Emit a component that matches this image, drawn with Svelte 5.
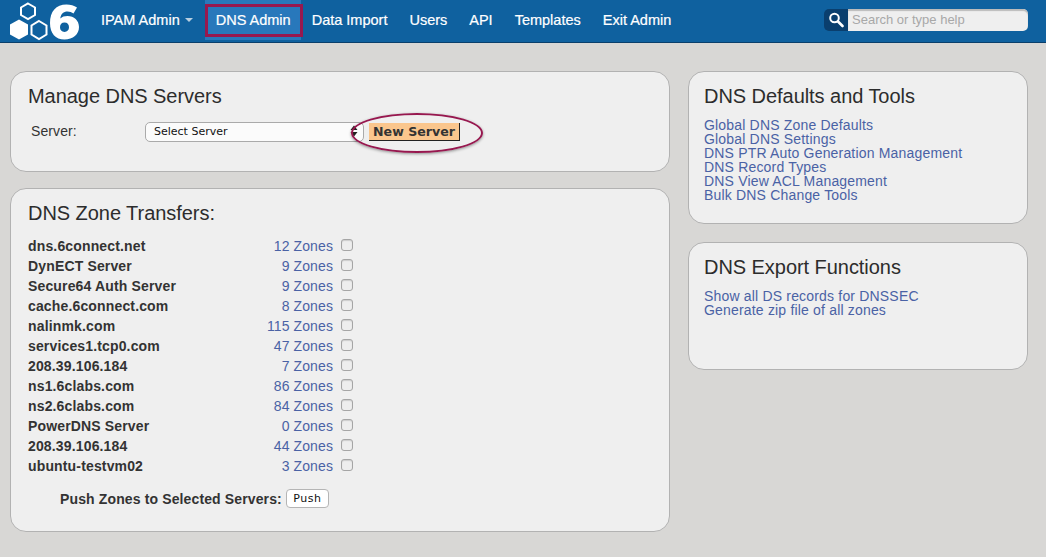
<script>
    const navItems = ['DNS Admin', 'Data Import', 'Users', 'API', 'Templates', 'Exit Admin']

    const servers = [
        ['dns.6connect.net', 12],
        ['DynECT Server', 9],
        ['Secure64 Auth Server', 9],
        ['cache.6connect.com', 8],
        ['nalinmk.com', 115],
        ['services1.tcp0.com', 47],
        ['208.39.106.184', 7],
        ['ns1.6clabs.com', 86],
        ['ns2.6clabs.com', 84],
        ['PowerDNS Server', 0],
        ['208.39.106.184', 44],
        ['ubuntu-testvm02', 3],
    ]

    const toolLinks = [
        'Global DNS Zone Defaults',
        'Global DNS Settings',
        'DNS PTR Auto Generation Management',
        'DNS Record Types',
        'DNS View ACL Management',
        'Bulk DNS Change Tools',
    ]

    const exportLinks = ['Show all DS records for DNSSEC', 'Generate zip file of all zones']
</script>

<header class="navbar">
    <div class="logo">
        <svg width="90" height="42" viewBox="0 0 90 42">
            <path d="M28 3.5 L35 7.5 V15 L28 19 L21 15 V7.5 Z" fill="none" stroke="#fff" stroke-width="2" />
            <path d="M19 19.5 L28 24.5 V34.5 L19 39.5 L10 34.5 V24.5 Z" fill="#fff" />
            <path d="M39 21 L46.500 25.500 V34.500 L39 39 L31.500 34.500 V25.500 Z" fill="none" stroke="#fff" stroke-width="2" />
            <path fill="#fff" fill-rule="evenodd" d="M77 7.500 C74 5.500 70.500 4.500 66.500 4.500 C56 4.500 50 11.500 50 23 C50 33.500 55.500 39.500 64.500 39.500 C73 39.500 79 34.500 79 27 C79 20.500 74 16 67.500 16 C64.500 16 62 16.800 60.300 18.500 C60.800 14 63.500 11.500 67.500 11.500 C69.800 11.500 71.800 12.300 73.500 13.500 Z M64.500 22.500 C67.300 22.500 69 24.500 69 27.300 C69 30 67.300 32 64.500 32 C61.700 32 60 30 60 27.300 C60 24.500 61.700 22.500 64.500 22.500 Z" />
        </svg>
    </div>
    <nav class="nav">
        <span class="item">IPAM Admin <i class="caret"></i></span>
        {#each navItems as item, i}
            <span class="item" class:active={i === 0}>{item}</span>
        {/each}
    </nav>
    <div class="search">
        <span class="search-btn">
            <svg width="16" height="16" viewBox="0 0 16 16">
                <circle cx="6.500" cy="6" r="4.300" fill="none" stroke="#fff" stroke-width="2" />
                <path d="M10 9.500 L14.500 14" stroke="#fff" stroke-width="2.600" stroke-linecap="round" />
            </svg>
        </span>
        <span class="search-input">Search or type help</span>
    </div>
    <div class="nav-mark"></div>
</header>

<main class="page">
    <div class="col-left">
        <section class="panel manage">
            <h2>Manage DNS Servers</h2>
            <div class="server-row">
                <label for="srv">Server:</label>
                <div class="select" id="srv">
                    <span>Select Server</span>
                    <svg class="arrows" width="8" height="12" viewBox="0 0 8 12">
                        <path d="M4 0.500 L7.500 5 H0.500 Z M4 11.500 L0.500 7 H7.500 Z" fill="#222" />
                    </svg>
                </div>
                <span class="new-server">New Server</span>
                <div class="ring"></div>
            </div>
        </section>

        <section class="panel transfers">
            <h2>DNS Zone Transfers:</h2>
            <div class="rows">
                {#each servers as [name, count]}
                    <div class="row">
                        <span class="name">{name}</span>
                        <a class="zones" href="#zones">{count} Zones</a>
                        <span class="check"></span>
                    </div>
                {/each}
            </div>
            <div class="push-row">
                <strong>Push Zones to Selected Servers:</strong>
                <span class="push">Push</span>
            </div>
        </section>
    </div>

    <div class="col-right">
        <section class="panel tools">
            <h2>DNS Defaults and Tools</h2>
            <div class="links">
                {#each toolLinks as link}
                    <a href="#tools">{link}</a>
                {/each}
            </div>
        </section>
        <section class="panel exports">
            <h2>DNS Export Functions</h2>
            <div class="links">
                {#each exportLinks as link}
                    <a href="#exports">{link}</a>
                {/each}
            </div>
        </section>
    </div>
</main>

<style>
    :global(body) {
        margin: 0;
        background: #d8d7d5;
        font-family: "Liberation Sans", Arial, sans-serif;
        font-size: 14px;
        color: #333;
    }

    .navbar {
        position: relative;
        display: flex;
        height: 42px;
        background: #0f619f;
        border-bottom: 1px solid #0a3f6b;
    }

    .logo {
        width: 90px;
    }

    .logo svg {
        display: block;
    }

    .nav {
        display: flex;
        flex: 1;
        color: #fff;
    }

    .item {
        display: flex;
        align-items: center;
        height: 40px;
        padding: 0 11px;
        font-size: 14.5px;
        font-weight: normal;
        -webkit-text-stroke: 0.2px #fff;
    }

    .caret {
        display: inline-block;
        margin-left: 5px;
        border-left: 4px solid transparent;
        border-right: 4px solid transparent;
        border-top: 4px solid #b9cfe0;
    }

    .item.active {
        height: 40px;
        margin-left: 1px;
        padding-right: 10px;
        background: #2878bb;
    }

    .nav-mark {
        position: absolute;
        left: 205px;
        top: 4px;
        width: 92px;
        height: 27px;
        border: 3px solid #97184f;
    }

    .search {
        display: flex;
        width: 204px;
        height: 22px;
        margin: 9px 18px 0 0;
    }

    .search-btn {
        display: flex;
        align-items: center;
        justify-content: center;
        width: 24px;
        background: #0a3f6e;
        border-radius: 5px 0 0 5px;
    }

    .search-input {
        flex: 1;
        padding-left: 4px;
        background: #efefef;
        border-radius: 0 5px 5px 0;
        box-shadow: inset 0 2px 1px #bbb;
        color: #a8a8a8;
        font-size: 13px;
        line-height: 22px;
    }

    .page {
        display: flex;
        gap: 18px;
        padding: 28px 18px 0 10px;
    }

    .col-left {
        display: flex;
        flex-direction: column;
        gap: 16px;
        width: 660px;
    }

    .col-right {
        display: flex;
        flex-direction: column;
        gap: 18px;
        width: 340px;
    }

    .panel {
        box-sizing: border-box;
        padding: 12px 17px;
        background: #efefef;
        border: 1px solid #b2b2b2;
        border-radius: 16px;
    }

    h2 {
        margin: 0;
        font-size: 20px;
        font-weight: normal;
        line-height: 24px;
        letter-spacing: -0.05px;
        color: #2c2c2c;
    }

    .manage {
        height: 101px;
    }

    .server-row {
        position: relative;
        display: flex;
        align-items: center;
        height: 20px;
        margin-top: 14px;
    }

    label {
        width: 117px;
        margin-bottom: 2px;
        padding-left: 3px;
        box-sizing: border-box;
        font-size: 14px;
        letter-spacing: 0.1px;
    }

    .select {
        position: relative;
        display: flex;
        align-items: center;
        box-sizing: border-box;
        width: 219px;
        height: 20px;
        padding: 0 0 2px 8px;
        background: #fbfbfb;
        border: 1px solid #aaa;
        border-radius: 5px;
        font-family: "DejaVu Sans", sans-serif;
        font-size: 11px;
        color: #111;
    }

    .arrows {
        position: absolute;
        right: 5px;
        top: 2px;
    }

    .new-server {
        box-sizing: border-box;
        width: 91px;
        height: 18px;
        margin-left: 5px;
        background: #fac68d;
        border-right: 1px solid #222;
        border-bottom: 1px solid #222;
        font-family: "DejaVu Sans", sans-serif;
        font-weight: bold;
        font-size: 12.6px;
        line-height: 17px;
        text-align: center;
        color: #333;
    }

    .ring {
        position: absolute;
        left: 323px;
        top: -9px;
        width: 128px;
        height: 36px;
        border: 2px solid #97184f;
        border-radius: 50%;
        box-shadow: 0 1px 3px rgba(0, 0, 0, 0.4);
    }

    .transfers {
        height: 344px;
    }

    .rows {
        margin-top: 11px;
    }

    .row {
        display: flex;
        align-items: center;
        height: 20px;
    }

    .name {
        width: 226px;
        font-weight: bold;
        letter-spacing: 0.15px;
        color: #333;
    }

    .zones {
        width: 79px;
        text-align: right;
        letter-spacing: 0.1px;
        color: #4a62a5;
        text-decoration: none;
    }

    .check {
        box-sizing: border-box;
        width: 12px;
        height: 12px;
        margin: -2px 0 0 8px;
        background: #eee;
        border: 1px solid #a5a5a5;
        border-radius: 3px;
        box-shadow: inset 0 1px 1px #ccc;
    }

    .push-row {
        display: flex;
        align-items: center;
        margin: 13px 0 0 32px;
        letter-spacing: 0.13px;
        color: #333;
    }

    .push {
        box-sizing: border-box;
        width: 43px;
        height: 19px;
        margin-left: 4px;
        background: #fff;
        border: 1px solid #b5b5b5;
        border-radius: 4px;
        font-family: "DejaVu Sans", sans-serif;
        font-size: 11px;
        letter-spacing: 0.5px;
        line-height: 18px;
        text-align: center;
        color: #111;
    }

    .links {
        display: flex;
        flex-direction: column;
        margin-top: 10px;
    }

    .links a {
        color: #4a62a5;
        line-height: 14px;
        letter-spacing: 0.18px;
        text-decoration: none;
    }

    .panel.tools, .panel.exports {
        padding-left: 15px;
    }

    .tools {
        height: 153px;
    }

    .exports {
        height: 128px;
    }
</style>
